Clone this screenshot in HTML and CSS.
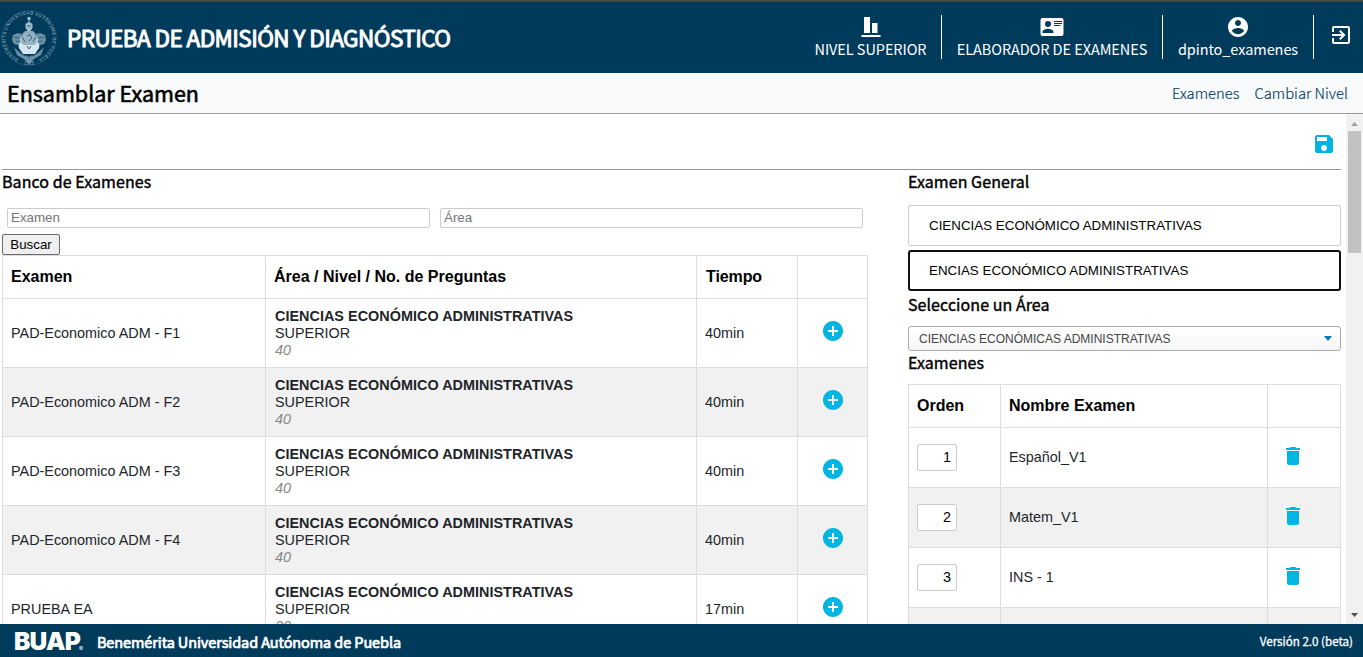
FILE: index.html
```html
<!DOCTYPE html>
<html lang="es">
<head>
<meta charset="utf-8">
<title>Ensamblar Examen</title>
<link rel="stylesheet" href="styles.css">
</head>
<body>
<svg class="defs" width="0" height="0">
  <symbol id="add" viewBox="0 0 24 24"><path d="M12 2C6.48 2 2 6.48 2 12s4.480 10 10 10 10-4.480 10-10S17.520 2 12 2zm5 11h-4v4h-2v-4H7v-2h4V7h2v4h4v2z"/></symbol>
  <symbol id="trash" viewBox="0 0 24 24"><path d="M6 19c0 1.100.9 2 2 2h8c1.100 0 2-.9 2-2V7H6v12zM19 4h-3.500l-1-1h-5l-1 1H5v2h14V4z"/></symbol>
</svg>
<header class="top">
  <svg class="seal" viewBox="0 0 58 58" width="58" height="58">
    <defs><path id="ring" d="M29 52.500A23.500 23.500 0 1 1 29.100 52.500"/></defs>
    <circle class="seal-line" cx="29" cy="29" r="27.200"/>
    <text class="seal-text"><textPath href="#ring" startOffset="11" textLength="126">BENEMÉRITA UNIVERSIDAD AUTÓNOMA DE PUEBLA</textPath></text>
    <text class="seal-text" x="24" y="55.500">1578</text>
    <g class="seal-art">
      <path d="M27.500 8h3v3h-1v2l3 2v4l-2 3h-3l-2-3v-4l3-2v-2h-1z" opacity=".75"/>
      <path d="M25 22h8l3 3H22z" opacity=".65"/>
      <path d="M22 25l-4-1-5 2-1 5 2 4 4 1 1 4 3-1zM36 25l4-1 5 2 1 5-2 4-4 1-1 4-3-1z" opacity=".5"/>
      <path d="M23 25h12l3 5-1 6H21l-1-6z" opacity=".7"/>
      <path d="M19 33l5 3h10l5-3v6l-4 6h-12l-4-6z"/>
      <path d="M14 38l6 6 5 3h8l5-3 6-6-3 8-7 4-5 5-5-5-7-4z" opacity=".5"/>
    </g>
    <path class="seal-cut" d="M27 27l3-1 2 3-3 3M22 28l3 5M36 28l-3 5M27 37l2 3 2-3M25 46l4 2 4-2M14 28l5 1M44 28l-5 1M27 17h4M16 32l4 1M42 32l-4 1"/>
  </svg>
  <h1 class="brand">PRUEBA DE ADMISIÓN Y DIAGNÓSTICO</h1>
  <nav class="user">
    <div class="item level">
      <svg width="24" height="24" viewBox="0 0 24 24"><path d="M21.500 22H2.500v-2h19v2zM11 2H5v16h6V2zm7.500 6h-5.500v10h5.500V8z"/></svg>
      <span>NIVEL SUPERIOR</span>
    </div>
    <div class="item role">
      <svg width="26" height="24" viewBox="0 0 26 24"><path fill-rule="evenodd" d="M3.500 3h19a2 2 0 0 1 2 2v14a2 2 0 0 1-2 2h-19a2 2 0 0 1-2-2V5a2 2 0 0 1 2-2zm5.500 3a3 3 0 1 0 0 6 3 3 0 0 0 0-6zM3.500 18h11v-1c0-2-3.700-3.200-5.500-3.200S3.500 15 3.500 17v1zM15 6h8v1h-8zm0 2h8v1h-8zm0 2h6.500v1h-6.500z"/></svg>
      <span>ELABORADOR DE EXAMENES</span>
    </div>
    <div class="item account">
      <svg width="24" height="24" viewBox="0 0 24 24"><path d="M12 2C6.480 2 2 6.480 2 12s4.480 10 10 10 10-4.480 10-10S17.520 2 12 2zm0 3c1.660 0 3 1.340 3 3s-1.340 3-3 3-3-1.340-3-3 1.340-3 3-3zm0 14.200c-2.500 0-4.710-1.280-6-3.220.03-1.990 4-3.080 6-3.080 1.990 0 5.970 1.090 6 3.080-1.290 1.940-3.500 3.220-6 3.220z"/></svg>
      <span>dpinto_examenes</span>
    </div>
    <div class="exit">
      <svg width="24" height="24" viewBox="0 0 24 24"><path d="M10.090 15.590L11.500 17l5-5-5-5-1.410 1.410L12.670 11H3v2h9.670l-2.580 2.590zM19 3H5c-1.110 0-2 .9-2 2v4h2V5h14v14H5v-4H3v4c0 1.100.89 2 2 2h14c1.100 0 2-.9 2-2V5c0-1.100-.9-2-2-2z"/></svg>
    </div>
  </nav>
</header>
<div class="sub">
  <h2 class="page-title">Ensamblar Examen</h2>
  <div class="links"><a>Examenes</a><a>Cambiar Nivel</a></div>
</div>
<div class="body">
  <main class="main">
    <div class="toolbar">
      <svg class="blue" width="24" height="24" viewBox="0 0 24 24"><path d="M17 3H5c-1.110 0-2 .9-2 2v14c0 1.100.89 2 2 2h14c1.100 0 2-.9 2-2V7l-4-4zm-5 16c-1.660 0-3-1.340-3-3s1.340-3 3-3 3 1.340 3 3-1.340 3-3 3zm3-10H5V5h10v4z"/></svg>
    </div>
    <div class="cols">
      <section class="bank">
        <h3 class="h h-bank">Banco de Examenes</h3>
        <div class="filters"><input placeholder="Examen"><input placeholder="Área"></div>
        <button class="search">Buscar</button>
        <table class="grid exams">
          <colgroup><col class="c1"><col class="c2"><col class="c3"><col class="c4"></colgroup>
          <tr><th>Examen</th><th>Área / Nivel / No. de Preguntas</th><th class="time">Tiempo</th><th></th></tr>
          <tr><td>PAD-Economico ADM - F1</td><td class="info"><b>CIENCIAS ECONÓMICO ADMINISTRATIVAS</b><br>SUPERIOR<br><i>40</i></td><td>40min</td><td class="act"><svg class="blue" width="24" height="24"><use href="#add"/></svg></td></tr>
          <tr class="alt"><td>PAD-Economico ADM - F2</td><td class="info"><b>CIENCIAS ECONÓMICO ADMINISTRATIVAS</b><br>SUPERIOR<br><i>40</i></td><td>40min</td><td class="act"><svg class="blue" width="24" height="24"><use href="#add"/></svg></td></tr>
          <tr><td>PAD-Economico ADM - F3</td><td class="info"><b>CIENCIAS ECONÓMICO ADMINISTRATIVAS</b><br>SUPERIOR<br><i>40</i></td><td>40min</td><td class="act"><svg class="blue" width="24" height="24"><use href="#add"/></svg></td></tr>
          <tr class="alt"><td>PAD-Economico ADM - F4</td><td class="info"><b>CIENCIAS ECONÓMICO ADMINISTRATIVAS</b><br>SUPERIOR<br><i>40</i></td><td>40min</td><td class="act"><svg class="blue" width="24" height="24"><use href="#add"/></svg></td></tr>
          <tr><td>PRUEBA EA</td><td class="info"><b>CIENCIAS ECONÓMICO ADMINISTRATIVAS</b><br>SUPERIOR<br><i>20</i></td><td>17min</td><td class="act"><svg class="blue" width="24" height="24"><use href="#add"/></svg></td></tr>
        </table>
      </section>
      <section class="general">
        <h3 class="h h-gen">Examen General</h3>
        <div class="field">CIENCIAS ECONÓMICO ADMINISTRATIVAS</div>
        <div class="field focus">ENCIAS ECONÓMICO ADMINISTRATIVAS</div>
        <h3 class="h h-area">Seleccione un Área</h3>
        <div class="select"><span>CIENCIAS ECONÓMICAS ADMINISTRATIVAS</span><svg width="8" height="5"><path d="M0 0h8L4 5z"/></svg></div>
        <h3 class="h h-ex">Examenes</h3>
        <table class="grid order">
          <colgroup><col class="o1"><col class="o2"><col class="o3"></colgroup>
          <tr><th>Orden</th><th>Nombre Examen</th><th></th></tr>
          <tr><td><input value="1"></td><td>Español_V1</td><td class="del"><svg class="blue" width="24" height="24"><use href="#trash"/></svg></td></tr>
          <tr class="alt"><td><input value="2"></td><td>Matem_V1</td><td class="del"><svg class="blue" width="24" height="24"><use href="#trash"/></svg></td></tr>
          <tr><td><input value="3"></td><td>INS - 1</td><td class="del"><svg class="blue" width="24" height="24"><use href="#trash"/></svg></td></tr>
          <tr class="alt"><td></td><td></td><td></td></tr>
        </table>
      </section>
    </div>
  </main>
  <div class="bar">
    <svg width="7" height="4"><path fill="#a3a3a3" d="M0 4h7L3.500 0z"/></svg>
    <div class="thumb"></div>
    <svg class="down" width="7" height="4"><path fill="#505050" d="M0 0h7L3.500 4z"/></svg>
  </div>
</div>
<footer class="foot">
  <span class="logo">BUAP</span><span class="reg">®</span>
  <span class="uni">Benemérita Universidad Autónoma de Puebla</span>
  <span class="ver">Versión 2.0 (beta)</span>
</footer>
</body>
</html>
```
FILE: styles.css
```css
* { box-sizing: border-box; }
body { margin: 0; width: 1363px; height: 657px; overflow: hidden; display: flex; flex-direction: column; background: #fff; font-family: "Liberation Sans", sans-serif; color: #212529; }
h1, h2, h3 { margin: 0; font-weight: 400; }
svg { display: block; flex: none; }
.defs { position: absolute; }
.top, .sub, .foot, .h { font-family: "Noto Sans CJK SC", sans-serif; }
.top { height: 73px; flex: none; border-top: 2px solid #4a4747; background: #003b5c; color: #fff; display: flex; align-items: center; }
.seal { margin-top: 1px; }
.seal-line { fill: none; stroke: #b8ccd8; stroke-width: .5; opacity: .35; }
.seal-text { font-size: 4.5px; fill: #b8ccd8; opacity: .85; }
.seal-art { fill: #d5e6ef; }
.seal-cut { fill: none; stroke: #2b6383; stroke-width: 1; }
.brand { margin: 0 0 2px 9px; font-size: 22.500px; line-height: 36px; letter-spacing: -.57px; -webkit-text-stroke: 1px #fff; white-space: nowrap; }
.user { margin-left: auto; display: flex; align-items: center; height: 44px; margin-bottom: 1px; }
.user svg { fill: #fff; }
.item { height: 44px; border-right: 1px solid #fff; display: flex; flex-direction: column; align-items: center; font-size: 14.5px; line-height: 20px; letter-spacing: -.07px; white-space: nowrap; }
.level { width: 142px; }
.role { width: 221px; }
.account { width: 151px; }
.exit { width: 49px; padding: 0 0 4px 15px; }
.sub { height: 41px; flex: none; border-bottom: 1px solid #999; background: #f8fafc; display: flex; align-items: center; justify-content: space-between; padding: 0 15px 2px 7px; }
.page-title { padding-top: 2px; color: #000; font-size: 21.500px; line-height: 32px; -webkit-text-stroke: .6px #000; }
.links { display: flex; gap: 15px; font-size: 14.8px; color: #003b5c; font-weight: 300; -webkit-text-stroke: .15px #003b5c; }
.body { flex: 1; min-height: 0; display: flex; }
.main { flex: 1; overflow: hidden; padding: 0 5px 0 2px; }
.toolbar { height: 56px; border-bottom: 1px solid #999; padding: 18px 5px 0 0; display: flex; justify-content: flex-end; }
.blue { fill: #00b5e2; }
.cols { display: flex; gap: 40px; }
.bank { width: 866px; flex: none; }
.general { width: 433px; flex: none; }
.h { height: 24px; color: #000; font-size: 16px; line-height: 22px; letter-spacing: .06px; -webkit-text-stroke: .4px #000; white-space: nowrap; }
.filters { padding: 14px 5px 0; display: flex; gap: 10px; }
.filters input { flex: 1; min-width: 0; height: 20px; border: 1px solid #ccc; border-radius: 2px; padding: 0 3px 2px; font: 13.333px "Liberation Sans", sans-serif; }
.filters input::placeholder { color: #757575; }
.search { display: block; width: 58px; height: 21px; margin-top: 6px; padding: 0; border: 1px solid #6b6b6b; border-radius: 2px; background: #efefef; color: #000; font: 13.333px "Liberation Sans", sans-serif; }
.grid { border-collapse: collapse; table-layout: fixed; font-size: 14.4px; line-height: 17px; }
.grid th, .grid td { border: 1px solid #ddd; padding: 0 8px; text-align: left; }
.grid th { color: #000; font-size: 16px; letter-spacing: 0; padding-bottom: 2px; }
.grid .time { padding-left: 9px; letter-spacing: -.1px; }
.grid tr:first-child { height: 43px; }
.alt { background: #f1f1f1; }
.exams { width: 866px; }
.exams tr { height: 69px; }
.c1 { width: 263px; } .c2 { width: 431px; } .c3 { width: 101px; } .c4 { width: 70px; }
.grid .info { padding-left: 9px; }
.info b { letter-spacing: .03px; }
.info i { color: #888; }
.exams .act { padding: 0 0 4px 23px; }
.field { height: 41px; border: 1px solid #ccc; border-radius: 2px; padding: 0 20px; margin-bottom: 4px; line-height: 39px; font-size: 13.333px; letter-spacing: .02px; color: #000; }
.h-gen { margin-bottom: 11px; }
.focus { border: 2px solid #101010; border-radius: 3px; padding: 0 19px; line-height: 37px; margin-bottom: 2px; }
.select { height: 25px; margin-top: 9px; border: 1px solid #aaa; border-radius: 3px; background: linear-gradient(#fff, #f7f7f7); display: flex; align-items: center; justify-content: space-between; padding: 0 8px 0 10px; font-size: 12px; color: #444; }
.select svg { fill: #007db8; }
.order { width: 433px; margin-top: 9px; }
.order tr { height: 60px; }
.o1 { width: 92px; } .o2 { width: 267px; } .o3 { width: 73px; }
.order input { display: block; width: 40px; height: 27px; border: 1px solid #ccc; border-radius: 2px; padding: 0 5px 1px; text-align: right; font: 14.4px "Liberation Sans", sans-serif; color: #000; }
.order .del { padding: 0 0 3px 13px; }
.bar { width: 17px; flex: none; background: #f1f1f1; display: flex; flex-direction: column; align-items: center; padding: 8px 0 7px; }
.thumb { width: 13px; height: 122px; margin-top: 5px; background: #c1c1c1; }
.down { margin-top: auto; }
.foot { height: 33px; flex: none; background: #003b5c; color: #fff; display: flex; align-items: center; padding: 1px 10px 0 14px; white-space: nowrap; }
.logo { font: 900 24.500px/24px Inter, sans-serif; letter-spacing: -.8px; }
.reg { width: 5px; margin-left: -1px; font: 6px/6px Inter, sans-serif; align-self: flex-end; padding-bottom: 5px; }
.uni { margin-left: 13px; font-size: 14.5px; letter-spacing: -.1px; -webkit-text-stroke: .7px #fff; }
.ver { margin-left: auto; font-size: 11.600px; -webkit-text-stroke: .3px #fff; }
```
